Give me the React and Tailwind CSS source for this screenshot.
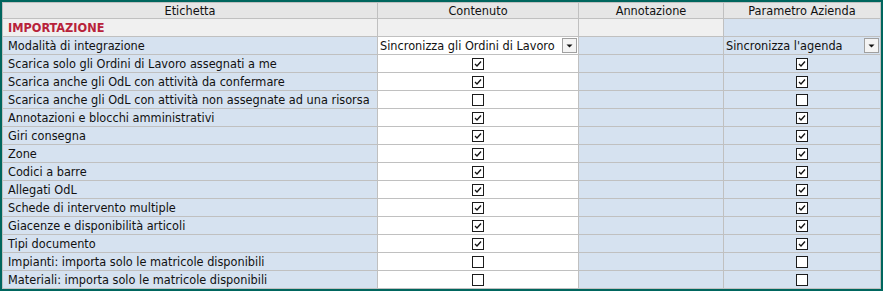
import React from "react";

const rows = [
  { label: "Scarica solo gli Ordini di Lavoro assegnati a me", c: true, p: true },
  { label: "Scarica anche gli OdL con attività da confermare", c: true, p: true },
  { label: "Scarica anche gli OdL con attività non assegnate ad una risorsa", c: false, p: false },
  { label: "Annotazioni e blocchi amministrativi", c: true, p: true },
  { label: "Giri consegna", c: true, p: true },
  { label: "Zone", c: true, p: true },
  { label: "Codici a barre", c: true, p: true },
  { label: "Allegati OdL", c: true, p: true },
  { label: "Schede di intervento multiple", c: true, p: true },
  { label: "Giacenze e disponibilità articoli", c: true, p: true },
  { label: "Tipi documento", c: true, p: true },
  { label: "Impianti: importa solo le matricole disponibili", c: false, p: false },
  { label: "Materiali: importa solo le matricole disponibili", c: false, p: false },
];

function Check({ on }) {
  return (
    <span className="inline-flex w-[12px] h-[12px] border border-[#1c1c1c] bg-white items-center justify-center align-middle">
      {on && (
        <svg width="10" height="10" viewBox="0 0 10 10">
          <path d="M2 5 L4 7 L8 2.5" fill="none" stroke="#111" strokeWidth="1.3" />
        </svg>
      )}
    </span>
  );
}

function Combo({ text }) {
  return (
    <div className="flex items-center justify-between h-[16px]">
      <span className="pl-[2px] whitespace-nowrap">{text}</span>
      <span className="w-[15px] h-[15px] mr-[1px] border border-[#a0a0a0] bg-[#f4f4f4] flex items-center justify-center">
        <svg width="7" height="4" viewBox="0 0 7 4">
          <path d="M0.5 0.5 H6.5 L3.5 3.5 Z" fill="#111" />
        </svg>
      </span>
    </div>
  );
}

const cell = "border border-[#c0c0c0] h-[18px] p-0 leading-[15px]";

export default function App() {
  return (
    <div
      className="w-[883px] h-[291px] bg-[#00665e] pt-[2px] pl-[2px] overflow-hidden text-[12.6px] text-[#111]"
      style={{ fontFamily: '"DejaVu Sans Condensed", "DejaVu Sans", sans-serif' }}
    >
      <table className="border-collapse bg-[#d6e2f0] table-fixed w-[878px]">
        <colgroup>
          <col className="w-[375px]" />
          <col className="w-[201px]" />
          <col className="w-[145px]" />
          <col className="w-[157px]" />
        </colgroup>
        <thead>
          <tr className="bg-[#e6e6e6]">
            {["Etichetta", "Contenuto", "Annotazione", "Parametro Azienda"].map((h) => (
              <th key={h} className="border border-[#c0c0c0] h-[16px] p-0 leading-[14px] font-normal text-center">
                {h}
              </th>
            ))}
          </tr>
        </thead>
        <tbody>
          <tr>
            <td className={`${cell} bg-[#f0f0f0] pl-[5px] font-bold text-[#b8223a]`}>IMPORTAZIONE</td>
            <td className={`${cell} bg-[#f0f0f0]`}></td>
            <td className={`${cell} bg-[#f0f0f0]`}></td>
            <td className={cell}></td>
          </tr>
          <tr>
            <td className={`${cell} pl-[5px]`}>Modalità di integrazione</td>
            <td className={`${cell} bg-white`}>
              <Combo text="Sincronizza gli Ordini di Lavoro" />
            </td>
            <td className={cell}></td>
            <td className={cell}>
              <Combo text="Sincronizza l'agenda" />
            </td>
          </tr>
          {rows.map((r) => (
            <tr key={r.label}>
              <td className={`${cell} pl-[5px] whitespace-nowrap`}>{r.label}</td>
              <td className={`${cell} bg-white text-center leading-none`}>
                <Check on={r.c} />
              </td>
              <td className={cell}></td>
              <td className={`${cell} text-center leading-none`}>
                <Check on={r.p} />
              </td>
            </tr>
          ))}
        </tbody>
      </table>
    </div>
  );
}
